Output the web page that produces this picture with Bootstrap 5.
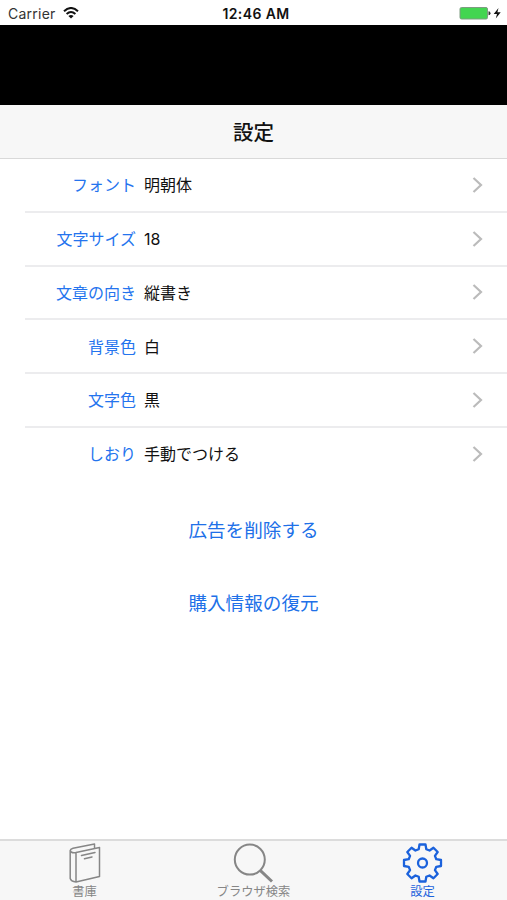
<!DOCTYPE html>
<html lang="ja">
<head>
<meta charset="utf-8">
<meta name="viewport" content="width=device-width, initial-scale=1">
<title>設定</title>
<link href="https://cdn.jsdelivr.net/npm/bootstrap@5.3.0/dist/css/bootstrap.min.css" rel="stylesheet">
<style>
body{font-family:Inter,"Noto Sans CJK JP",sans-serif;color:#111;line-height:1.2;overflow:hidden}
.screen{height:900px}
.status-bar{height:25px;padding:3px 5px 0 8px}
.status-carrier{font-size:14px;color:#333;letter-spacing:.25px}
.status-time{font-size:14px;letter-spacing:.4px;padding-left:2px}
.ad-banner{height:80px}
.title-bar{height:54px;background:#f7f7f7;border-bottom:1px solid #d9d9d9;padding-top:4px}
.title-bar h1{font-size:20.5px;color:#111;font-weight:500}
.setting{height:53.8px;padding:0 24px 0 0;margin-left:25px;border-bottom:2px solid #ececee}
.setting:last-child{border-bottom-color:transparent}
.setting-name{width:111px;margin-right:8px;color:#2474ee}
.setting-name,.setting-value{font-size:16px;white-space:nowrap;padding-top:2px}
.text-action{color:#2070e8;font-size:18.6px;line-height:28px}
.actions{gap:45px;padding-top:34px}
.tab-bar{height:61px;background:#f7f7f7;border-top:2px solid #dcdcdc;color:#868686}
.tab-label{font-size:12.3px;line-height:14px}
.tab-bar .current{color:#1b62dc}
.tab-bar a{padding-top:2px}
</style>
<script src="https://cdn.jsdelivr.net/npm/bootstrap@5.3.0/dist/js/bootstrap.bundle.min.js"></script>
</head>
<body>
<div class="screen d-flex flex-column bg-white">
  <header class="status-bar row g-0 align-items-center flex-shrink-0">
    <div class="col d-flex align-items-center">
      <span class="status-carrier">Carrier</span>
      <svg class="ms-1" width="20" height="14" viewBox="-1 1 18 14" fill="none" stroke="#111" stroke-width="2"><path d="M2 5.2Q9-1.2 16 5.2M4.6 8Q9 4 13.4 8"/><path d="M6.4 10Q9 7.8 11.6 10L9 12.6Z" fill="#111" stroke="none"/></svg>
    </div>
    <div class="status-time col-auto fw-semibold">12:46 AM</div>
    <div class="col d-flex justify-content-end">
      <svg width="43" height="14" viewBox="0 1 43 14"><rect x="1" y="1.5" width="27.5" height="11.5" rx="1.5" fill="#43d551" stroke="#7d9c80"/><path d="M29.5 5.3q2 0 2 2t-2 2z" fill="#333"/><path d="M39.5 2L34.7 8H38L36.8 12.5L41.7 6.3H38.4Z" fill="#111"/></svg>
    </div>
  </header>
  <div class="ad-banner bg-black flex-shrink-0"></div>
  <div class="title-bar d-flex align-items-center justify-content-center flex-shrink-0">
    <h1 class="m-0">設定</h1>
  </div>
  <main class="flex-grow-1">
    <div>
      <div class="setting d-flex align-items-center"><span class="setting-name text-end">フォント</span><span class="setting-value">明朝体</span><svg class="ms-auto" width="11" height="16" viewBox="0 0 11 16" fill="none" stroke="#bbb" stroke-width="2.2"><path d="M1.5 1l7.5 7-7.5 7"/></svg></div>
      <div class="setting d-flex align-items-center"><span class="setting-name text-end">文字サイズ</span><span class="setting-value">18</span><svg class="ms-auto" width="11" height="16" viewBox="0 0 11 16" fill="none" stroke="#bbb" stroke-width="2.2"><path d="M1.5 1l7.5 7-7.5 7"/></svg></div>
      <div class="setting d-flex align-items-center"><span class="setting-name text-end">文章の向き</span><span class="setting-value">縦書き</span><svg class="ms-auto" width="11" height="16" viewBox="0 0 11 16" fill="none" stroke="#bbb" stroke-width="2.2"><path d="M1.5 1l7.5 7-7.5 7"/></svg></div>
      <div class="setting d-flex align-items-center"><span class="setting-name text-end">背景色</span><span class="setting-value">白</span><svg class="ms-auto" width="11" height="16" viewBox="0 0 11 16" fill="none" stroke="#bbb" stroke-width="2.2"><path d="M1.5 1l7.5 7-7.5 7"/></svg></div>
      <div class="setting d-flex align-items-center"><span class="setting-name text-end">文字色</span><span class="setting-value">黒</span><svg class="ms-auto" width="11" height="16" viewBox="0 0 11 16" fill="none" stroke="#bbb" stroke-width="2.2"><path d="M1.5 1l7.5 7-7.5 7"/></svg></div>
      <div class="setting d-flex align-items-center"><span class="setting-name text-end">しおり</span><span class="setting-value">手動でつける</span><svg class="ms-auto" width="11" height="16" viewBox="0 0 11 16" fill="none" stroke="#bbb" stroke-width="2.2"><path d="M1.5 1l7.5 7-7.5 7"/></svg></div>
    </div>
    <div class="actions d-flex flex-column align-items-center">
      <a class="text-action text-decoration-none" href="#">広告を削除する</a>
      <a class="text-action text-decoration-none" href="#">購入情報の復元</a>
    </div>
  </main>
  <nav class="tab-bar row g-0 flex-shrink-0">
    <a class="col d-flex flex-column align-items-center text-reset text-decoration-none" href="#">
      <svg width="42" height="42" viewBox="0 0 42 42" fill="none" stroke="currentColor" stroke-width="1.5" stroke-linejoin="round" stroke-linecap="round"><path d="M12 9.5L35.5 4.5V33.5L12 39ZM12 9.5Q7 10.5 6.2 7.5V35.5Q7 38.5 12 39M6.2 7.5Q6.3 6 9 5.2L30.5 1V4.5M17.5 12.6L31 9.4M20.5 15.8L28 14"/></svg>
      <span class="tab-label">書庫</span>
    </a>
    <a class="col d-flex flex-column align-items-center text-reset text-decoration-none" href="#">
      <svg width="42" height="42" viewBox="0.5 0 42 42" fill="none" stroke="currentColor"><circle cx="17.3" cy="16.6" r="15" stroke-width="2"/><path d="M27.7 27.3L39.5 38.5" stroke-width="3"/></svg>
      <span class="tab-label">ブラウザ検索</span>
    </a>
    <a class="current col d-flex flex-column align-items-center text-decoration-none" href="#">
      <svg width="42" height="42" viewBox="-20.5 -20 42 42" fill="none" stroke="currentColor" stroke-width="2.3" stroke-linejoin="round"><path d="M-3-18.5H3L3.8-13.8L7.07-12.44L10.96-15.2L15.2-10.96L12.44-7.07L13.8-3.8L18.5-3V3L13.8 3.8L12.44 7.07L15.2 10.96L10.96 15.2L7.07 12.44L3.8 13.8L3 18.5H-3L-3.8 13.8L-7.07 12.44L-10.96 15.2L-15.2 10.96L-12.44 7.07L-13.8 3.8L-18.5 3V-3L-13.8-3.8L-12.44-7.07L-15.2-10.96L-10.96-15.2L-7.07-12.44L-3.8-13.8Z"/><circle r="4.5"/></svg>
      <span class="tab-label">設定</span>
    </a>
  </nav>
</div>
</body>
</html>
